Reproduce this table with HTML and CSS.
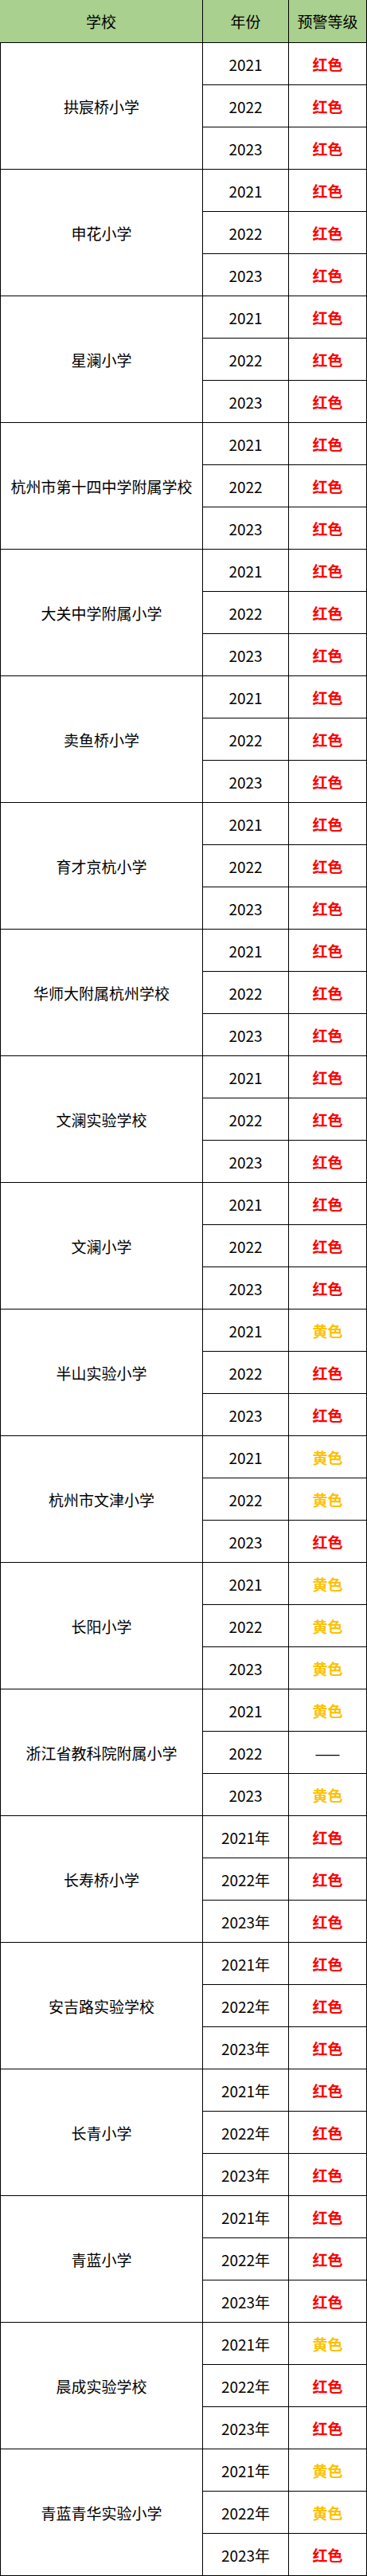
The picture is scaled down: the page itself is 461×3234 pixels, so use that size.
FILE: index.html
```html
<!DOCTYPE html>
<html lang="zh-CN">
<head>
<meta charset="utf-8">
<title>预警等级</title>
<link rel="stylesheet" href="styles.css">
</head>
<body>
<div class="sheet">
  <div class="head">
    <div class="hcell">学校</div>
    <div class="hcell">年份</div>
    <div class="hcell">预警等级</div>
  </div>

  <div class="group"><div class="school">拱宸桥小学</div><div class="rows">
    <div class="row"><div class="year">2021</div><div class="level red">红色</div></div>
    <div class="row"><div class="year">2022</div><div class="level red">红色</div></div>
    <div class="row"><div class="year">2023</div><div class="level red">红色</div></div>
  </div></div>

  <div class="group"><div class="school">申花小学</div><div class="rows">
    <div class="row"><div class="year">2021</div><div class="level red">红色</div></div>
    <div class="row"><div class="year">2022</div><div class="level red">红色</div></div>
    <div class="row"><div class="year">2023</div><div class="level red">红色</div></div>
  </div></div>

  <div class="group"><div class="school">星澜小学</div><div class="rows">
    <div class="row"><div class="year">2021</div><div class="level red">红色</div></div>
    <div class="row"><div class="year">2022</div><div class="level red">红色</div></div>
    <div class="row"><div class="year">2023</div><div class="level red">红色</div></div>
  </div></div>

  <div class="group"><div class="school">杭州市第十四中学附属学校</div><div class="rows">
    <div class="row"><div class="year">2021</div><div class="level red">红色</div></div>
    <div class="row"><div class="year">2022</div><div class="level red">红色</div></div>
    <div class="row"><div class="year">2023</div><div class="level red">红色</div></div>
  </div></div>

  <div class="group"><div class="school">大关中学附属小学</div><div class="rows">
    <div class="row"><div class="year">2021</div><div class="level red">红色</div></div>
    <div class="row"><div class="year">2022</div><div class="level red">红色</div></div>
    <div class="row"><div class="year">2023</div><div class="level red">红色</div></div>
  </div></div>

  <div class="group"><div class="school">卖鱼桥小学</div><div class="rows">
    <div class="row"><div class="year">2021</div><div class="level red">红色</div></div>
    <div class="row"><div class="year">2022</div><div class="level red">红色</div></div>
    <div class="row"><div class="year">2023</div><div class="level red">红色</div></div>
  </div></div>

  <div class="group"><div class="school">育才京杭小学</div><div class="rows">
    <div class="row"><div class="year">2021</div><div class="level red">红色</div></div>
    <div class="row"><div class="year">2022</div><div class="level red">红色</div></div>
    <div class="row"><div class="year">2023</div><div class="level red">红色</div></div>
  </div></div>

  <div class="group"><div class="school">华师大附属杭州学校</div><div class="rows">
    <div class="row"><div class="year">2021</div><div class="level red">红色</div></div>
    <div class="row"><div class="year">2022</div><div class="level red">红色</div></div>
    <div class="row"><div class="year">2023</div><div class="level red">红色</div></div>
  </div></div>

  <div class="group"><div class="school">文澜实验学校</div><div class="rows">
    <div class="row"><div class="year">2021</div><div class="level red">红色</div></div>
    <div class="row"><div class="year">2022</div><div class="level red">红色</div></div>
    <div class="row"><div class="year">2023</div><div class="level red">红色</div></div>
  </div></div>

  <div class="group"><div class="school">文澜小学</div><div class="rows">
    <div class="row"><div class="year">2021</div><div class="level red">红色</div></div>
    <div class="row"><div class="year">2022</div><div class="level red">红色</div></div>
    <div class="row"><div class="year">2023</div><div class="level red">红色</div></div>
  </div></div>

  <div class="group"><div class="school">半山实验小学</div><div class="rows">
    <div class="row"><div class="year">2021</div><div class="level yellow">黄色</div></div>
    <div class="row"><div class="year">2022</div><div class="level red">红色</div></div>
    <div class="row"><div class="year">2023</div><div class="level red">红色</div></div>
  </div></div>

  <div class="group"><div class="school">杭州市文津小学</div><div class="rows">
    <div class="row"><div class="year">2021</div><div class="level yellow">黄色</div></div>
    <div class="row"><div class="year">2022</div><div class="level yellow">黄色</div></div>
    <div class="row"><div class="year">2023</div><div class="level red">红色</div></div>
  </div></div>

  <div class="group"><div class="school">长阳小学</div><div class="rows">
    <div class="row"><div class="year">2021</div><div class="level yellow">黄色</div></div>
    <div class="row"><div class="year">2022</div><div class="level yellow">黄色</div></div>
    <div class="row"><div class="year">2023</div><div class="level yellow">黄色</div></div>
  </div></div>

  <div class="group"><div class="school">浙江省教科院附属小学</div><div class="rows">
    <div class="row"><div class="year">2021</div><div class="level yellow">黄色</div></div>
    <div class="row"><div class="year">2022</div><div class="level dash">——</div></div>
    <div class="row"><div class="year">2023</div><div class="level yellow">黄色</div></div>
  </div></div>

  <div class="group"><div class="school">长寿桥小学</div><div class="rows">
    <div class="row"><div class="year">2021年</div><div class="level red">红色</div></div>
    <div class="row"><div class="year">2022年</div><div class="level red">红色</div></div>
    <div class="row"><div class="year">2023年</div><div class="level red">红色</div></div>
  </div></div>

  <div class="group"><div class="school">安吉路实验学校</div><div class="rows">
    <div class="row"><div class="year">2021年</div><div class="level red">红色</div></div>
    <div class="row"><div class="year">2022年</div><div class="level red">红色</div></div>
    <div class="row"><div class="year">2023年</div><div class="level red">红色</div></div>
  </div></div>

  <div class="group"><div class="school">长青小学</div><div class="rows">
    <div class="row"><div class="year">2021年</div><div class="level red">红色</div></div>
    <div class="row"><div class="year">2022年</div><div class="level red">红色</div></div>
    <div class="row"><div class="year">2023年</div><div class="level red">红色</div></div>
  </div></div>

  <div class="group"><div class="school">青蓝小学</div><div class="rows">
    <div class="row"><div class="year">2021年</div><div class="level red">红色</div></div>
    <div class="row"><div class="year">2022年</div><div class="level red">红色</div></div>
    <div class="row"><div class="year">2023年</div><div class="level red">红色</div></div>
  </div></div>

  <div class="group"><div class="school">晨成实验学校</div><div class="rows">
    <div class="row"><div class="year">2021年</div><div class="level yellow">黄色</div></div>
    <div class="row"><div class="year">2022年</div><div class="level red">红色</div></div>
    <div class="row"><div class="year">2023年</div><div class="level red">红色</div></div>
  </div></div>

  <div class="group"><div class="school">青蓝青华实验小学</div><div class="rows">
    <div class="row"><div class="year">2021年</div><div class="level yellow">黄色</div></div>
    <div class="row"><div class="year">2022年</div><div class="level yellow">黄色</div></div>
    <div class="row"><div class="year">2023年</div><div class="level red">红色</div></div>
  </div></div>
</div>
</body>
</html>
```

FILE: styles.css
```css
* { box-sizing: border-box; }

html, body {
  margin: 0;
  padding: 0;
  background: #ffffff;
}

body {
  font-family: "Noto Sans CJK SC", "Noto Sans", sans-serif;
  font-size: 19px;
  color: #000000;
}

.sheet {
  width: 461px;
  display: flex;
  flex-direction: column;
}

.head {
  display: grid;
  grid-template-columns: 255px 108px 98px;
  height: 54px;
  background: #a9d08e;
}

.hcell {
  display: flex;
  align-items: center;
  justify-content: center;
  border-right: 1px solid #000;
  border-bottom: 1px solid #000;
  line-height: 1;
}

.group {
  display: grid;
  grid-template-columns: 255px 206px;
}

.school {
  display: flex;
  align-items: center;
  justify-content: center;
  border-left: 1px solid #000;
  border-right: 1px solid #000;
  border-bottom: 1px solid #000;
  line-height: 1;
  white-space: nowrap;
}

.rows {
  display: flex;
  flex-direction: column;
}

.row {
  display: grid;
  grid-template-columns: 108px 98px;
  height: 53px;
}

.year,
.level {
  display: flex;
  align-items: center;
  justify-content: center;
  border-right: 1px solid #000;
  border-bottom: 1px solid #000;
  line-height: 1;
}

.level {
  font-weight: bold;
}

.red { color: #ff0000; }
.yellow { color: #ffc000; }
.dash {
  font-weight: normal;
  color: #000;
}
```
